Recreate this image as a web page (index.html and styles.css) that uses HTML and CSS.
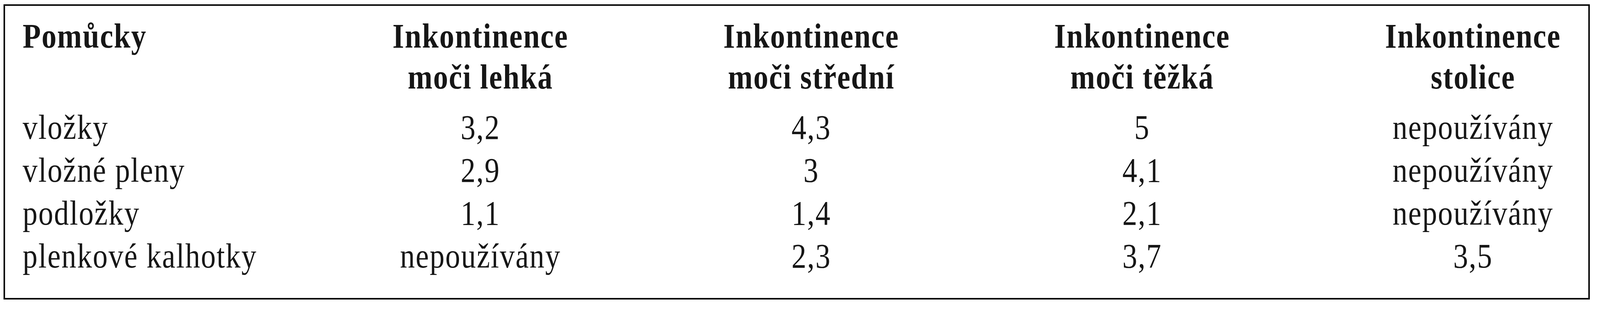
FILE: index.html
```html
<!DOCTYPE html>
<html lang="cs">
<head>
<meta charset="utf-8">
<title>Pomůcky</title>
<link rel="stylesheet" href="styles.css">
<script src="app.js"></script>
</head>
<body>
<div class="frame">
  <div class="grid">
    <div class="th first">Pomůcky</div>
    <div class="th">Inkontinence<br>moči lehká</div>
    <div class="th">Inkontinence<br>moči střední</div>
    <div class="th">Inkontinence<br>moči těžká</div>
    <div class="th">Inkontinence<br>stolice</div>

    <div class="td first">vložky</div>
    <div class="td">3,2</div>
    <div class="td">4,3</div>
    <div class="td">5</div>
    <div class="td">nepoužívány</div>

    <div class="td first">vložné pleny</div>
    <div class="td">2,9</div>
    <div class="td">3</div>
    <div class="td">4,1</div>
    <div class="td">nepoužívány</div>

    <div class="td first">podložky</div>
    <div class="td">1,1</div>
    <div class="td">1,4</div>
    <div class="td">2,1</div>
    <div class="td">nepoužívány</div>

    <div class="td first">plenkové kalhotky</div>
    <div class="td">nepoužívány</div>
    <div class="td">2,3</div>
    <div class="td">3,7</div>
    <div class="td">3,5</div>
  </div>
</div>
</body>
</html>
```

FILE: app.js
```js
// Horizontal measures are taken on a 4744px-wide design; glyphs follow the same horizontal ratio.
document.documentElement.style.setProperty('--sx', String(window.innerWidth / 4744));
```

FILE: styles.css
```css
:root {
  --u: calc(100vw / 4744);
}

html, body {
  margin: 0;
  padding: 0;
  background: #ffffff;
  overflow: hidden;
}

body {
  font-family: "Liberation Serif", serif;
  color: #161616;
}

.frame {
  box-sizing: border-box;
  margin: 11px 0 0 calc(10 * var(--u));
  width: calc(4704 * var(--u));
  height: 757px;
  border-top: 4px solid #0a0a0a;
  border-bottom: 4px solid #0a0a0a;
  border-left: calc(5 * var(--u)) solid #0a0a0a;
  border-right: calc(5 * var(--u)) solid #0a0a0a;
  padding: 25px calc(12 * var(--u)) 0 calc(53 * var(--u));
}

.grid {
  display: grid;
  grid-template-columns: minmax(0, 1fr) repeat(4, calc(660 * var(--u)));
  column-gap: calc(321 * var(--u));
  font-family: "Liberation Serif", serif;
  font-size: 88px;
  letter-spacing: 2.5px;
}

.th,
.td {
  text-align: center;
  white-space: nowrap;
  transform: scaleX(var(--sx, 0.86341));
  transform-origin: 50% 50%;
}

.th {
  font-weight: 700;
  line-height: 105px;
  letter-spacing: 2.3px;
  padding-bottom: 22px;
}

.td {
  line-height: 110px;
}

.first {
  text-align: left;
  transform-origin: 0 50%;
}
```
